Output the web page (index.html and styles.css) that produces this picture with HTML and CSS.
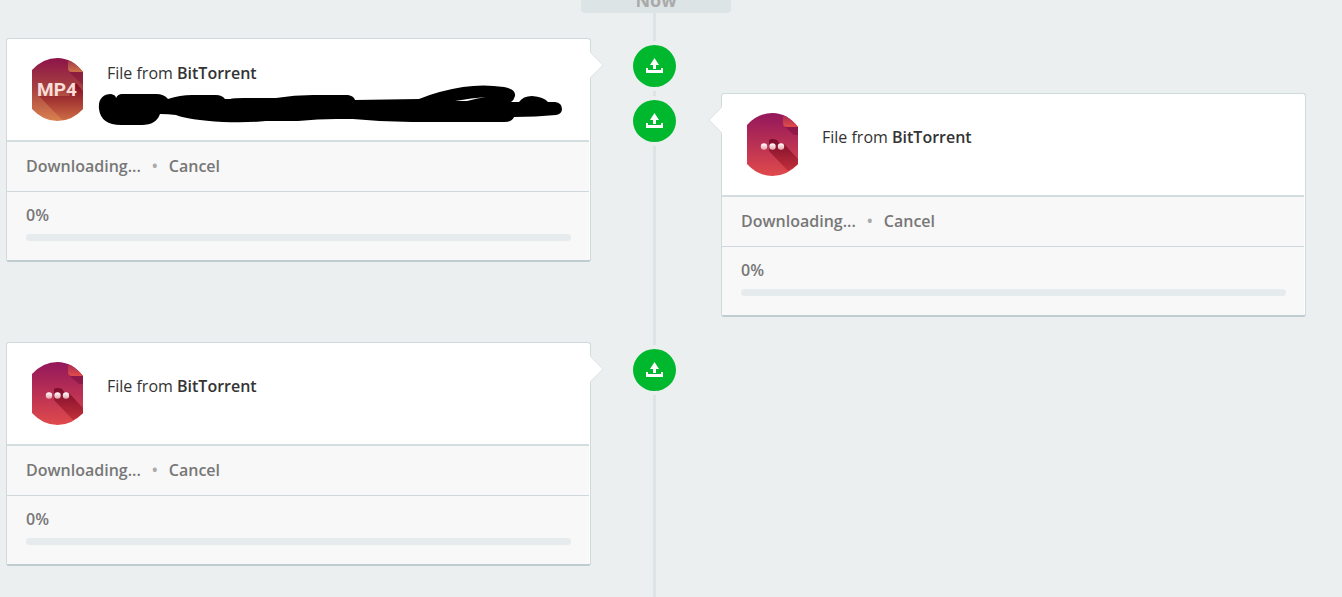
FILE: index.html
```html
<!DOCTYPE html>
<html lang="en">

<head>
    <meta charset="UTF-8">
    <meta name="viewport" content="width=device-width, initial-scale=1.0">
    <title>Transfers</title>
    <link rel="stylesheet" href="styles.css">
</head>

<body>
    <!-- shared icons -->
    <svg class="defs" width="0" height="0" aria-hidden="true">
        <defs>
            <linearGradient id="mp4-bg" x1="0" y1="0" x2="0" y2="1">
                <stop offset="0" stop-color="#8c1449"/>
                <stop offset=".5" stop-color="#a9433f"/>
                <stop offset="1" stop-color="#d98250"/>
            </linearGradient>
            <linearGradient id="mp4-fold" x1="0" y1="0" x2="0" y2="1">
                <stop offset="0" stop-color="#96304a"/>
                <stop offset="1" stop-color="#cf7048"/>
            </linearGradient>
            <linearGradient id="file-bg" x1="0" y1="0" x2="0" y2="1">
                <stop offset="0" stop-color="#93175b"/>
                <stop offset="1" stop-color="#e04a4c"/>
            </linearGradient>
            <linearGradient id="file-fold" x1="0" y1="0" x2="0" y2="1">
                <stop offset="0" stop-color="#a02656"/>
                <stop offset="1" stop-color="#e04c4a"/>
            </linearGradient>
            <linearGradient id="mp4-shadow" x1="0" y1="0" x2="0" y2="1">
                <stop offset="0" stop-color="#7d0a28"/>
                <stop offset="1" stop-color="#b8452f" stop-opacity=".3"/>
            </linearGradient>
            <linearGradient id="file-shadow" x1="0" y1="0" x2="0" y2="1">
                <stop offset="0" stop-color="#7c0c2c"/>
                <stop offset="1" stop-color="#c2303a"/>
            </linearGradient>
            <linearGradient id="dot" x1="0" y1="0" x2="0" y2="1">
                <stop offset="0" stop-color="#fff"/>
                <stop offset="1" stop-color="#e5a5ae"/>
            </linearGradient>
            <clipPath id="file-clip">
                <path d="M0 12Q11 0 25.500 0Q40 0 51 14V51Q40 63 25.500 63Q11 63 0 51Z"/>
            </clipPath>
            <symbol id="icon-mp4" viewBox="0 0 51 63">
                <g clip-path="url(#file-clip)">
                    <path fill="url(#mp4-bg)" d="M0 0h51v63H0z"/>
                    <path fill="url(#mp4-shadow)" d="M7 38H37L44 25L51 33V63H31Z"/>
                    <path fill="#7d1037" opacity=".5" d="M37 14H51V27Z"/>
                    <path fill="url(#mp4-fold)" d="M36 0V10Q36 14 40 14H51V0Z"/>
                </g>
                <text x="25" y="38" text-anchor="middle" class="icon-text">MP4</text>
            </symbol>
            <symbol id="icon-file" viewBox="0 0 51 63">
                <g clip-path="url(#file-clip)">
                    <path fill="url(#file-bg)" d="M0 0h51v63H0z"/>
                    <path fill="url(#file-shadow)" d="M22 27Q25 25 30 27L33 31H37L51 46V52L41 58L22 38Z"/>
                    <path fill="#7d1040" opacity=".6" d="M38 14H51V22L47 22Z"/>
                    <path fill="url(#file-fold)" d="M36 0V10Q36 14 40 14H51V0Z"/>
                </g>
                <circle cx="17" cy="33.500" r="3.200" fill="url(#dot)"/>
                <circle cx="25.500" cy="33.500" r="3.200" fill="url(#dot)"/>
                <circle cx="34" cy="33.500" r="3.200" fill="url(#dot)"/>
            </symbol>
            <symbol id="icon-upload" viewBox="0 0 17 15">
                <path fill="#fff" d="M8.500 0L13 7H10V11H7V7H4ZM0 10H2V12H15V10H17V15H0Z"/>
            </symbol>
        </defs>
    </svg>

    <main class="page">
        <h2 class="period">Now</h2>

        <div class="timeline">
            <div class="line"></div>

            <div class="badge badge-first"><svg width="17" height="15"><use href="#icon-upload"/></svg></div>
            <article class="card card-left card-first">
                <div class="file">
                    <svg class="file-icon" width="51" height="63"><use href="#icon-mp4"/></svg>
                    <div class="file-info has-name">
                        <p>File from <strong>BitTorrent</strong></p>
                        <svg class="redacted" width="465" height="40" viewBox="0 0 465 40">
                            <path d="M1 24C0 14 5 9 13 9Q18 10 18 13Q20 9 24 9H58Q66 9 70 14Q82 10 94 10H118Q124 10 127 14L132 14Q136 13 146 13H178Q196 10 215 10H250Q256 11 257 15L321 14Q340 6 365 2Q385 -1 406 2Q418 4 417 11Q416 15 413 17H421Q425 11 434 11Q446 12 450 17H457Q464 18 464 24Q464 29 458 30Q438 32 416 32Q414 37 407 37H314Q285 37 255 34H238Q220 34 200 36H168Q150 38 125 37Q90 35 78 30Q70 29 62 29Q58 40 44 40H23Q3 40 1 24Z"/>
                            <path fill="#fff" d="M357 16Q374 13 388 12Q380 13 369 16Z"/>
                        </svg>
                    </div>
                </div>
                <div class="actions">
                    <span>Downloading...</span>
                    <span class="bullet">•</span>
                    <button type="button">Cancel</button>
                </div>
                <div class="progress">
                    <label for="progress1">0%</label>
                    <progress id="progress1" value="0" max="100"></progress>
                </div>
            </article>

            <div class="badge badge-second"><svg width="17" height="15"><use href="#icon-upload"/></svg></div>
            <article class="card card-right card-second">
                <div class="file">
                    <svg class="file-icon" width="51" height="63"><use href="#icon-file"/></svg>
                    <div class="file-info">
                        <p>File from <strong>BitTorrent</strong></p>
                    </div>
                </div>
                <div class="actions">
                    <span>Downloading...</span>
                    <span class="bullet">•</span>
                    <button type="button">Cancel</button>
                </div>
                <div class="progress">
                    <label for="progress2">0%</label>
                    <progress id="progress2" value="0" max="100"></progress>
                </div>
            </article>

            <div class="badge badge-third"><svg width="17" height="15"><use href="#icon-upload"/></svg></div>
            <article class="card card-left card-third">
                <div class="file">
                    <svg class="file-icon" width="51" height="63"><use href="#icon-file"/></svg>
                    <div class="file-info">
                        <p>File from <strong>BitTorrent</strong></p>
                    </div>
                </div>
                <div class="actions">
                    <span>Downloading...</span>
                    <span class="bullet">•</span>
                    <button type="button">Cancel</button>
                </div>
                <div class="progress">
                    <label for="progress3">0%</label>
                    <progress id="progress3" value="0" max="100"></progress>
                </div>
            </article>
        </div>
    </main>
</body>

</html>
```

FILE: styles.css
```css
* {
    box-sizing: border-box;
}

body {
    margin: 0;
    background-color: #ebeff0;
    color: #333;
    font-family: "Open Sans", sans-serif;
    font-size: 16px;
    line-height: 24px;
}

p {
    margin: 0;
}

.defs {
    position: absolute;
}

.page {
    display: flex;
    flex-direction: column;
    height: 100vh;
    padding: 0 36px 0 6px;
    overflow: hidden;
}

/* scrolled partly out of view */
.period {
    flex: none;
    align-self: center;
    width: 150px;
    margin: -27px 0 0;
    padding: 15px 0 1px;
    border-radius: 4px;
    background-color: #dce4e5;
    color: #aaa;
    font-size: 18px;
    font-weight: 700;
    text-align: center;
}

.timeline {
    flex: 1;
    display: grid;
    grid-template-columns: 1fr 130px 1fr;
    grid-template-rows: 55px auto 55px 1fr;
    align-items: start;
    padding-top: 25px;
}

.line {
    grid-area: 1 / 2 / -1 / 3;
    align-self: stretch;
    width: 3px;
    margin: -25px 0 0 62px;
    background-color: #dce4e5;
}

.badge {
    z-index: 1;
    grid-column: 2;
    display: flex;
    align-items: center;
    justify-content: center;
    width: 51px;
    height: 50px;
    margin: 3px 0 0 38px;
    padding-bottom: 2px;
    border: 4px solid #ebeff0;
    border-radius: 50%;
    background-color: #00b82e;
}

.badge-first {
    grid-row: 1;
}

.badge-second {
    grid-row: 2;
}

.badge-third {
    grid-row: 4;
    margin-top: 28px;
}

.card {
    position: relative;
    padding-right: 1px;
    border: 1px solid #d0dadc;
    border-bottom: 2px solid #bfcdd1;
    border-radius: 3px;
    background-color: #fff;
}

.card-first {
    grid-area: 1 / 1 / 3 / 2;
}

.card-second {
    grid-area: 2 / 3 / 4 / 4;
}

.card-third {
    grid-area: 4 / 1 / 5 / 2;
    margin-top: 25px;
}

/* pointer towards the line */
.card::after {
    content: "";
    position: absolute;
    top: 16px;
    width: 18px;
    height: 18px;
    border: 1px solid #d4dddf;
    background-color: #fff;
    transform: rotate(45deg);
    clip-path: polygon(0 0, 100% 0, 100% 100%);
}

.card-left::after {
    right: -10px;
}

.card-right::after {
    left: -10px;
    transform: rotate(225deg);
}

.file {
    display: flex;
    gap: 24px;
    min-height: 101px;
    padding: 19px 19px 15px 25px;
}

.file-icon {
    flex: none;
}

.file-info {
    padding-top: 12px;
}

.file-info.has-name {
    padding-top: 3px;
}

.file-info strong {
    font-weight: 600;
}

.redacted {
    display: block;
    margin-left: -9px;
}

.icon-text {
    fill: #f8dcd8;
    font-family: "Roboto", sans-serif;
    font-size: 19px;
    font-weight: 700;
}

.actions {
    display: flex;
    align-items: center;
    gap: 11px;
    height: 51px;
    padding: 0 19px 2px;
    border-top: 2px solid #d3dddf;
    background-color: #f8f8f8;
    color: #777;
    font-weight: 600;
}

.actions button {
    padding: 0;
    border: 0;
    background: none;
    color: inherit;
    font: inherit;
    cursor: pointer;
}

.bullet {
    color: #aaa;
}

.progress {
    padding: 11px 18px 19px 19px;
    border-top: 1px solid #cfd9dc;
    background-color: #f8f8f8;
    color: #777;
    font-weight: 600;
}

.progress label {
    display: block;
    margin-bottom: 7px;
}

.progress progress {
    display: block;
    width: 100%;
    height: 7px;
    border: 0;
    border-radius: 4px;
    background-color: #e6ebed;
    overflow: hidden;
    appearance: none;
}

progress::-webkit-progress-bar {
    background-color: #e6ebed;
}

progress::-webkit-progress-value {
    background-color: #00b82e;
}
```
